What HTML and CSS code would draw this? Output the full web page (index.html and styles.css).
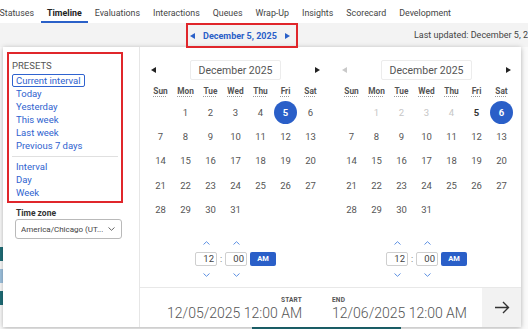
FILE: index.html
```html
<!DOCTYPE html>
<html lang="en">
<head>
  <meta charset="UTF-8" />
  <title>Timeline</title>
  <link rel="stylesheet" href="styles.css">
</head>
<body>
  <nav class="tabs">
    <span class="tab">Statuses</span>
    <span class="tab active">Timeline</span>
    <span class="tab">Evaluations</span>
    <span class="tab">Interactions</span>
    <span class="tab">Queues</span>
    <span class="tab">Wrap-Up</span>
    <span class="tab">Insights</span>
    <span class="tab">Scorecard</span>
    <span class="tab">Development</span>
  </nav>

  <div class="subbar">
    <div class="date-nav">
      <span class="tri tri-left"></span>
      <span>December 5, 2025</span>
      <span class="tri tri-right"></span>
    </div>
    <span class="updated">Last updated: December 5, 2</span>
  </div>

  <div class="page">
    <div class="edge-row r1"></div>
    <div class="edge-row r2"></div>
    <div class="edge-row r3"></div>
    <div class="track"></div>
  </div>

  <div class="picker">
    <aside class="side">
      <div class="presets">
        <div class="presets-title">PRESETS</div>
        <span class="preset current">Current interval</span>
        <span class="preset">Today</span>
        <span class="preset">Yesterday</span>
        <span class="preset">This week</span>
        <span class="preset">Last week</span>
        <span class="preset">Previous 7 days</span>
        <div class="divider"></div>
        <span class="preset">Interval</span>
        <span class="preset">Day</span>
        <span class="preset">Week</span>
      </div>
      <div class="tz-label">Time zone</div>
      <div class="tz-select">
        <span class="tz-value">America/Chicago (UT...</span>
        <svg width="7" height="4" viewBox="0 0 7 4"><path d="M0.5 0.5 L3.5 3.3 L6.5 0.5" fill="none" stroke="#555" stroke-width="0.9"/></svg>
      </div>
    </aside>

    <section class="range">
      <div class="calendars">
        <div class="cal">
          <div class="cal-head">
            <span class="tri tri-left dark"></span>
            <span class="month">December 2025</span>
            <span class="tri tri-right dark"></span>
          </div>
          <div class="week-head">
            <span class="wd">Sun</span><span class="wd">Mon</span><span class="wd">Tue</span><span class="wd">Wed</span><span class="wd">Thu</span><span class="wd">Fri</span><span class="wd">Sat</span>
          </div>
          <div class="days">
            <span class="day"></span><span class="day">1</span><span class="day">2</span><span class="day">3</span><span class="day">4</span><span class="day sel"><b>5</b></span><span class="day">6</span>
            <span class="day">7</span><span class="day">8</span><span class="day">9</span><span class="day">10</span><span class="day">11</span><span class="day">12</span><span class="day">13</span>
            <span class="day">14</span><span class="day">15</span><span class="day">16</span><span class="day">17</span><span class="day">18</span><span class="day">19</span><span class="day">20</span>
            <span class="day">21</span><span class="day">22</span><span class="day">23</span><span class="day">24</span><span class="day">25</span><span class="day">26</span><span class="day">27</span>
            <span class="day">28</span><span class="day">29</span><span class="day">30</span><span class="day">31</span>
          </div>
          <div class="time">
            <div class="tcol">
              <span class="chev"><svg width="7" height="4" viewBox="0 0 7 4"><path d="M0.5 3.5 L3.5 0.7 L6.5 3.5" fill="none" stroke="#5c8fe2" stroke-width="1"/></svg></span>
              <span class="tin">12</span>
              <span class="chev"><svg width="7" height="4" viewBox="0 0 7 4"><path d="M0.5 0.5 L3.5 3.3 L6.5 0.5" fill="none" stroke="#5c8fe2" stroke-width="1"/></svg></span>
            </div>
            <span class="colon">:</span>
            <div class="tcol">
              <span class="chev"><svg width="7" height="4" viewBox="0 0 7 4"><path d="M0.5 3.5 L3.5 0.7 L6.5 3.5" fill="none" stroke="#5c8fe2" stroke-width="1"/></svg></span>
              <span class="tin">00</span>
              <span class="chev"><svg width="7" height="4" viewBox="0 0 7 4"><path d="M0.5 0.5 L3.5 3.3 L6.5 0.5" fill="none" stroke="#5c8fe2" stroke-width="1"/></svg></span>
            </div>
            <span class="ampm">AM</span>
          </div>
        </div>

        <div class="cal">
          <div class="cal-head">
            <span class="tri tri-left light"></span>
            <span class="month">December 2025</span>
            <span class="tri tri-right dark"></span>
          </div>
          <div class="week-head">
            <span class="wd">Sun</span><span class="wd">Mon</span><span class="wd">Tue</span><span class="wd">Wed</span><span class="wd">Thu</span><span class="wd">Fri</span><span class="wd">Sat</span>
          </div>
          <div class="days">
            <span class="day"></span><span class="day off">1</span><span class="day off">2</span><span class="day off">3</span><span class="day off">4</span><span class="day strong">5</span><span class="day sel"><b>6</b></span>
            <span class="day">7</span><span class="day">8</span><span class="day">9</span><span class="day">10</span><span class="day">11</span><span class="day">12</span><span class="day">13</span>
            <span class="day">14</span><span class="day">15</span><span class="day">16</span><span class="day">17</span><span class="day">18</span><span class="day">19</span><span class="day">20</span>
            <span class="day">21</span><span class="day">22</span><span class="day">23</span><span class="day">24</span><span class="day">25</span><span class="day">26</span><span class="day">27</span>
            <span class="day">28</span><span class="day">29</span><span class="day">30</span><span class="day">31</span>
          </div>
          <div class="time">
            <div class="tcol">
              <span class="chev"><svg width="7" height="4" viewBox="0 0 7 4"><path d="M0.5 3.5 L3.5 0.7 L6.5 3.5" fill="none" stroke="#5c8fe2" stroke-width="1"/></svg></span>
              <span class="tin">12</span>
              <span class="chev"><svg width="7" height="4" viewBox="0 0 7 4"><path d="M0.5 0.5 L3.5 3.3 L6.5 0.5" fill="none" stroke="#5c8fe2" stroke-width="1"/></svg></span>
            </div>
            <span class="colon">:</span>
            <div class="tcol">
              <span class="chev"><svg width="7" height="4" viewBox="0 0 7 4"><path d="M0.5 3.5 L3.5 0.7 L6.5 3.5" fill="none" stroke="#5c8fe2" stroke-width="1"/></svg></span>
              <span class="tin">00</span>
              <span class="chev"><svg width="7" height="4" viewBox="0 0 7 4"><path d="M0.5 0.5 L3.5 3.3 L6.5 0.5" fill="none" stroke="#5c8fe2" stroke-width="1"/></svg></span>
            </div>
            <span class="ampm">AM</span>
          </div>
        </div>
      </div>

      <div class="range-bar">
        <div class="range-vals">
          <div class="rv start">
            <div class="rv-label">START</div>
            <div class="rv-value">12/05/2025 12:00 AM</div>
          </div>
          <div class="rv">
            <div class="rv-label">END</div>
            <div class="rv-value">12/06/2025 12:00 AM</div>
          </div>
        </div>
        <div class="go">
          <svg width="16" height="13" viewBox="0 0 16 13"><path d="M1 6.5 H14.5 M9 1 L14.5 6.5 L9 12" fill="none" stroke="#333" stroke-width="1.4"/></svg>
        </div>
      </div>
    </section>
  </div>
</body>
</html>
```

FILE: styles.css
```css
* {
  box-sizing: border-box;
}

body {
  margin: 0;
  width: 528px;
  height: 329px;
  overflow: hidden;
  position: relative;
  font-family: Roboto, "Liberation Sans", sans-serif;
  color: #444;
  background: #fff;
}

.tabs {
  display: flex;
  height: 23px;
  margin-left: -7px;
  white-space: nowrap;
}

.tab {
  padding: 5px 6.5px 0;
  font-size: 8.85px;
  line-height: 16px;
  color: #444;
  border-bottom: 2px solid transparent;
}

.tab.active {
  font-weight: 700;
  color: #222;
  border-bottom-color: #2a60c8;
}

.subbar {
  display: flex;
  align-items: flex-start;
  height: 24px;
  background: #f3f3f3;
  white-space: nowrap;
}

.date-nav {
  position: relative;
  z-index: 3;
  margin-left: 186px;
  width: 114px;
  height: 25px;
  border: 2px solid #e0262b;
  display: flex;
  align-items: center;
  justify-content: space-between;
  padding: 0 5.5px 0 1.5px;
  color: #2a60c8;
  font-weight: 700;
  font-size: 9px;
}

.tri {
  width: 0;
  height: 0;
  border-top: 3.5px solid transparent;
  border-bottom: 3.5px solid transparent;
}

.tri-left {
  border-right: 5px solid #2a60c8;
}

.tri-right {
  border-left: 5px solid #2a60c8;
}

.tri-left.dark { border-right-color: #222; }
.tri-right.dark { border-left-color: #222; }
.tri-left.light { border-right-color: #c9c9c9; }

.updated {
  margin-left: 116px;
  line-height: 24px;
  font-size: 9px;
  color: #444;
}

.page {
  height: 282px;
  position: relative;
  display: flex;
  flex-direction: column;
  justify-content: flex-end;
  background: #fafafa;
}

.edge-row {
  height: 14px;
  width: 3px;
  margin-bottom: 8px;
  background: #1f6e78;
}

.edge-row.r2 {
  background: #9fc3e0;
}

.track {
  height: 2px;
  margin: 14px 0 0 252px;
  width: 149px;
  background: #1f6e78;
}

/* date range dropdown */
.picker {
  position: absolute;
  top: 47px;
  left: 3px;
  width: 518px;
  height: 280px;
  display: flex;
  background: #fff;
  box-shadow: 0 1px 5px rgba(0, 0, 0, 0.3);
  z-index: 2;
}

.side {
  width: 140px;
  border-right: 1px solid #e6e6e6;
  padding: 5px 0 0 4px;
}

.presets {
  width: 116px;
  border: 2px solid #e0262b;
  padding: 6px 3px 2.5px;
}

.presets-title {
  font-size: 9.5px;
  line-height: 12px;
  color: #555;
}

.preset {
  display: block;
  width: max-content;
  padding: 0 4px;
  font-size: 9.5px;
  line-height: 13px;
  color: #2f63cf;
}

.preset.current {
  margin-top: 2px;
  padding: 0 3px;
  line-height: 11px;
  border: 1px solid #2f63cf;
  border-radius: 2px;
}

.divider {
  height: 1px;
  margin: 3.5px 0 3px;
  background: #e0e0e0;
}

.tz-label {
  margin: 4px 0 0 9px;
  font-size: 8.5px;
  font-weight: 700;
  line-height: 12px;
  color: #333;
}

.tz-select {
  display: flex;
  align-items: center;
  justify-content: space-between;
  gap: 4px;
  margin-left: 8px;
  width: 107px;
  height: 20px;
  padding: 0 6px 0 5px;
  border: 1px solid #b9b9b9;
  border-radius: 3px;
  font-size: 8px;
  color: #444;
}

.tz-value {
  white-space: nowrap;
  overflow: hidden;
}

.range {
  flex: 1;
  display: flex;
  flex-direction: column;
}

.calendars {
  display: flex;
  height: 240px;
}

.cal {
  width: 191px;
  padding: 13px 7px 0 8px;
}

.cal + .cal {
  width: auto;
  flex: 1;
}

.cal-head {
  width: 175px;
  height: 20px;
  display: flex;
  align-items: center;
  justify-content: space-between;
  padding: 0 3px;
}

.month {
  width: 91px;
  height: 20px;
  display: flex;
  align-items: center;
  justify-content: center;
  border: 1px solid #ececec;
  border-radius: 2px;
  font-size: 10.5px;
  color: #555;
}

.week-head,
.days {
  display: grid;
  grid-template-columns: repeat(7, 25px);
}

.week-head {
  margin-top: 2px;
  height: 18px;
  align-items: center;
}

.wd {
  text-align: center;
  font-size: 8.3px;
  font-weight: 700;
  color: #555;
  text-decoration: underline dotted #999;
  text-underline-offset: 1.5px;
}

.days {
  grid-auto-rows: 24.3px;
}

.day {
  display: flex;
  align-items: center;
  justify-content: center;
  font-size: 9.5px;
  color: #555;
}

.day.off {
  color: #c6c6c6;
}

.day.strong {
  font-weight: 700;
  color: #333;
}

.day.sel b {
  width: 23px;
  height: 23px;
  border-radius: 50%;
  display: flex;
  align-items: center;
  justify-content: center;
  background: #2a5fc8;
  color: #fff;
}

.time {
  width: 175px;
  margin-top: 12.5px;
  display: flex;
  align-items: center;
  justify-content: center;
}

.tcol {
  display: flex;
  flex-direction: column;
  align-items: center;
}

.chev {
  height: 18px;
  display: flex;
  align-items: center;
}

.tin {
  width: 22px;
  height: 14px;
  padding-right: 2px;
  border: 1px solid #cfcfcf;
  border-radius: 2px;
  text-align: right;
  font-size: 9.5px;
  line-height: 12px;
  color: #444;
}

.colon {
  width: 8px;
  text-align: center;
  font-size: 9px;
  color: #666;
}

.ampm {
  margin-left: 3px;
  width: 26px;
  height: 14px;
  display: flex;
  align-items: center;
  justify-content: center;
  background: #2a5fc8;
  border-radius: 2px;
  color: #fff;
  font-size: 7.5px;
  font-weight: 700;
}

.range-bar {
  display: flex;
  height: 40px;
  border-top: 1px solid #e8e8e8;
}

.range-vals {
  flex: 1;
  display: flex;
  justify-content: center;
  gap: 30px;
  padding: 8px 0 0 12px;
}

.rv.start {
  text-align: right;
}

.rv-label {
  font-size: 6.5px;
  font-weight: 700;
  line-height: 9px;
  color: #555;
  letter-spacing: 0.2px;
}

.rv-value {
  font-size: 14px;
  font-weight: 300;
  line-height: 16px;
  color: #555;
  white-space: nowrap;
}

.go {
  width: 39px;
  display: flex;
  align-items: center;
  justify-content: center;
  background: #f2f2f2;
}
```
